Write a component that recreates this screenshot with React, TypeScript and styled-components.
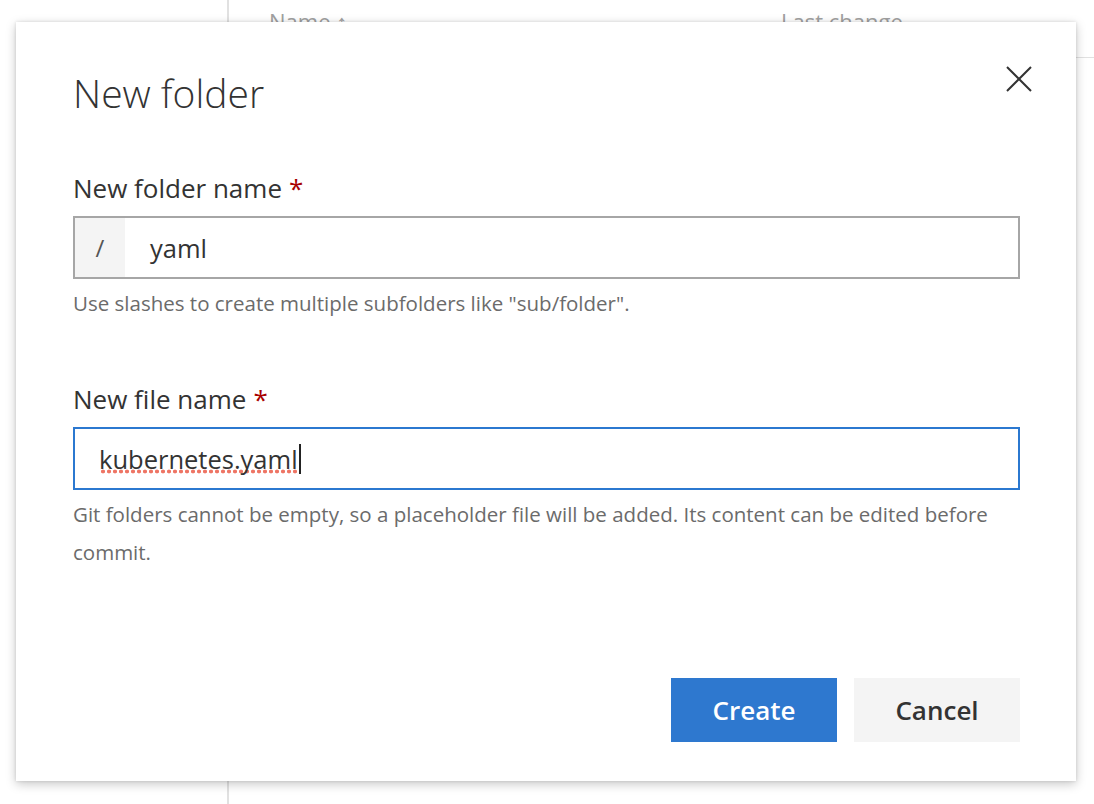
import React from 'react';
import styled, { createGlobalStyle } from 'styled-components';

const GlobalStyle = createGlobalStyle`
  html, body {
    margin: 0;
    padding: 0;
    background: #ffffff;
    font-family: "Segoe UI", "Open Sans", "Noto Sans", sans-serif;
  }
  #root {
    height: 804px;
    overflow: hidden;
  }
`;

const Page = styled.div`
  position: relative;
  display: flex;
  height: 804px;
  width: 1094px;
  overflow: hidden;
`;

const Sidebar = styled.div`
  width: 227px;
  flex-shrink: 0;
  border-right: 2px solid #e1e1e1;
`;

const Main = styled.div`
  flex: 1;
  display: flex;
  flex-direction: column;
`;

const HeaderRow = styled.div`
  display: flex;
  height: 58px;
  align-items: flex-start;
  padding-top: 6px;
  box-sizing: border-box;
  border-bottom: 1px solid #e1e1e1;
  font-size: 22px;
  color: #a0a0a0;
`;

const HeaderCell = styled.div<{ $width: number }>`
  width: ${(p) => p.$width}px;
  flex-shrink: 0;
`;

const Dialog = styled.div`
  position: absolute;
  left: 16px;
  top: 22px;
  width: 1060px;
  height: 759px;
  box-sizing: border-box;
  background: #ffffff;
  box-shadow: 0 3px 10px rgba(0, 0, 0, 0.22), 0 0 3px rgba(0, 0, 0, 0.12);
  padding: 45px 57px 0 57px;
  display: flex;
  flex-direction: column;
`;

const TitleRow = styled.div`
  display: flex;
  justify-content: space-between;
  align-items: flex-start;
  width: 946px;
`;

const Title = styled.h1`
  margin: 0;
  font-size: 39px;
  font-weight: 300;
  line-height: 52px;
  color: #333333;
`;

const CloseButton = styled.button`
  border: none;
  background: none;
  padding: 0;
  margin: -2px -14px 0 0;
  width: 28px;
  height: 28px;
  cursor: pointer;
  display: flex;
  align-items: center;
  justify-content: center;
`;

const Field = styled.div<{ $top: number }>`
  margin-top: ${(p) => p.$top}px;
  width: 947px;
  display: flex;
  flex-direction: column;
`;

const Label = styled.label`
  font-size: 26px;
  line-height: 34px;
  color: #333333;
  margin-bottom: 11px;
`;

const Required = styled.span`
  color: #a80000;
  margin-left: 7px;
`;

const InputBox = styled.div<{ $focused?: boolean }>`
  display: flex;
  height: 63px;
  box-sizing: border-box;
  border: 2px solid ${(p) => (p.$focused ? '#2b78d0' : '#a6a6a6')};
  background: #ffffff;
  align-items: stretch;
`;

const Prefix = styled.div`
  width: 50px;
  background: #f4f4f4;
  display: flex;
  align-items: center;
  justify-content: center;
  color: #555555;
  font-size: 24px;
`;

const Value = styled.div<{ $pad: number }>`
  display: flex;
  align-items: center;
  padding-left: ${(p) => p.$pad}px;
  font-size: 25.5px;
  color: #333333;
`;

const Misspelled = styled.span`
  background-image: radial-gradient(circle, #ee7565 1.7px, transparent 2.2px);
  background-size: 6px 5px;
  background-repeat: repeat-x;
  background-position: 1px calc(100% - 2px);
`;

const Caret = styled.span`
  display: inline-block;
  width: 2px;
  height: 30px;
  background: #222222;
  margin-left: 1px;
`;

const Help = styled.p`
  margin: 5px 0 0 0;
  font-size: 20.5px;
  line-height: 38px;
  color: #6b6b6b;
`;

const Footer = styled.div`
  margin-top: auto;
  margin-bottom: 39px;
  width: 947px;
  display: flex;
  justify-content: flex-end;
  gap: 17px;
`;

const Button = styled.button<{ $primary?: boolean }>`
  width: 166px;
  height: 64px;
  border: none;
  font-family: inherit;
  font-size: 26px;
  font-weight: 600;
  cursor: pointer;
  background: ${(p) => (p.$primary ? '#2e78cf' : '#f4f4f4')};
  color: ${(p) => (p.$primary ? '#ffffff' : '#333333')};
`;

const CloseIcon = () => (
  <svg width="26" height="26" viewBox="0 0 26 26">
    <path d="M1 1 L25 25 M25 1 L1 25" stroke="#333333" strokeWidth="2" fill="none" />
  </svg>
);

export default function App() {
  return (
    <>
      <GlobalStyle />
      <Page>
        <Sidebar />
        <Main>
          <HeaderRow>
            <HeaderCell $width={40} />
            <HeaderCell $width={512}>Name ↑</HeaderCell>
            <HeaderCell $width={300}>Last change</HeaderCell>
          </HeaderRow>
        </Main>
        <Dialog>
          <TitleRow>
            <Title>New folder</Title>
            <CloseButton aria-label="Close">
              <CloseIcon />
            </CloseButton>
          </TitleRow>
          <Field $top={52}>
            <Label>
              New folder name<Required>*</Required>
            </Label>
            <InputBox>
              <Prefix>/</Prefix>
              <Value $pad={25}>yaml</Value>
            </InputBox>
            <Help>Use slashes to create multiple subfolders like "sub/folder".</Help>
          </Field>
          <Field $top={60}>
            <Label>
              New file name<Required>*</Required>
            </Label>
            <InputBox $focused>
              <Value $pad={24}>
                <Misspelled>kubernetes.yaml</Misspelled>
                <Caret />
              </Value>
            </InputBox>
            <Help>
              Git folders cannot be empty, so a placeholder file will be added. Its content can be edited
              before commit.
            </Help>
          </Field>
          <Footer>
            <Button $primary>Create</Button>
            <Button>Cancel</Button>
          </Footer>
        </Dialog>
      </Page>
    </>
  );
}
